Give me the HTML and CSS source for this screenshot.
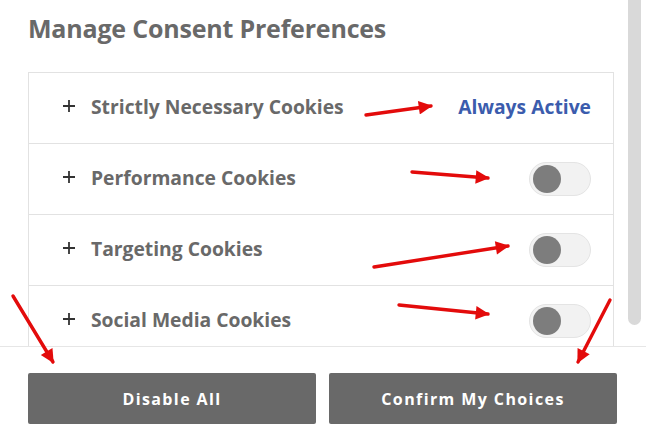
FILE: index.html
```html
<!DOCTYPE html>
<html lang="en">
<head>
  <meta charset="UTF-8" />
  <meta name="viewport" content="width=device-width, initial-scale=1.0" />
  <title>Manage Consent Preferences</title>
  <link rel="stylesheet" href="styles.css">
</head>
<body>
  <div class="panel">
    <!-- Scrolling part -->
    <div class="scroll-area">
      <div class="scroll-content">
        <h2>Manage Consent Preferences</h2>
        <div class="category-list">
          <div class="category-row">
            <span class="category-name"><svg class="plus" viewBox="0 0 12 12"><path d="M6 0v12M0 6h12"/></svg>Strictly Necessary Cookies</span>
            <span class="always-active">Always Active</span>
          </div>
          <div class="category-row">
            <span class="category-name"><svg class="plus" viewBox="0 0 12 12"><path d="M6 0v12M0 6h12"/></svg>Performance Cookies</span>
            <span class="toggle"><span class="knob"></span></span>
          </div>
          <div class="category-row">
            <span class="category-name"><svg class="plus" viewBox="0 0 12 12"><path d="M6 0v12M0 6h12"/></svg>Targeting Cookies</span>
            <span class="toggle"><span class="knob"></span></span>
          </div>
          <div class="category-row">
            <span class="category-name"><svg class="plus" viewBox="0 0 12 12"><path d="M6 0v12M0 6h12"/></svg>Social Media Cookies</span>
            <span class="toggle"><span class="knob"></span></span>
          </div>
        </div>
      </div>
      <div class="scrollbar"><div class="thumb"></div></div>
    </div>

    <!-- Buttons -->
    <div class="footer">
      <button class="btn">Disable All</button>
      <button class="btn">Confirm My Choices</button>
    </div>

    <!-- Annotation arrows -->
    <svg class="arrows" width="646" height="442" viewBox="0 0 646 442">
      <defs>
        <marker id="head" viewBox="0 0 10 10" refX="9" refY="5" markerWidth="6" markerHeight="4" orient="auto">
          <path d="M0 0L10 5L0 10z" fill="#e30b0b"/>
        </marker>
      </defs>
      <g stroke="#e30b0b" stroke-width="3.4" stroke-linecap="round" marker-end="url(#head)">
        <line x1="366" y1="115" x2="431" y2="106"/>
        <line x1="412" y1="172" x2="488" y2="178"/>
        <line x1="374" y1="267" x2="508" y2="246"/>
        <line x1="399" y1="305" x2="488" y2="314"/>
        <line x1="13" y1="296" x2="53" y2="362"/>
        <line x1="610" y1="300" x2="578" y2="362"/>
      </g>
    </svg>
  </div>
</body>
</html>
```

FILE: styles.css
```css
* {
  box-sizing: border-box;
}

body {
  margin: 0;
  font-family: "Open Sans", "Liberation Sans", sans-serif;
  background: white;
}

.panel {
  position: relative;
  width: 646px;
  height: 442px;
  overflow: hidden;
}

.scroll-area {
  display: flex;
  height: 346px;
  overflow: hidden;
}

.scroll-content {
  flex: 1;
  padding: 0 0 0 28px;
}

h2 {
  margin: 0;
  padding-top: 11px;
  height: 72px;
  font-size: 25px;
  font-weight: 700;
  color: #696969;
  letter-spacing: -0.2px;
}

.category-list {
  width: 586px;
  border: 1px solid #e2e2e2;
}

.category-row {
  display: flex;
  justify-content: space-between;
  align-items: center;
  height: 71px;
  padding: 0 22px 0 34px;
  border-bottom: 1px solid #e2e2e2;
}

.category-name {
  display: flex;
  align-items: center;
  gap: 16px;
  padding-bottom: 4px;
  font-size: 19.3px;
  font-weight: 700;
  color: #696969;
}

.plus {
  width: 12px;
  height: 12px;
  stroke: #333;
  stroke-width: 1.8;
  fill: none;
}

.always-active {
  padding-bottom: 4px;
  font-size: 19.3px;
  font-weight: 700;
  color: #3b5cad;
}

.toggle {
  display: flex;
  align-items: center;
  width: 62px;
  height: 34px;
  padding: 0 3px;
  border: 1px solid #e4e4e4;
  border-radius: 17px;
  background: #f2f2f2;
}

.knob {
  width: 28px;
  height: 28px;
  border-radius: 50%;
  background: #7d7d7d;
}

.scrollbar {
  width: 13px;
  margin-right: 5px;
}

.thumb {
  height: 325px;
  background: #d9d9d9;
  border-radius: 0 0 7px 7px;
}

.footer {
  display: flex;
  gap: 13px;
  padding: 26px 29px 0 28px;
  border-top: 1px solid #e6e6e6;
}

.btn {
  flex: 1;
  height: 51px;
  border: none;
  border-radius: 2px;
  background: #696969;
  color: white;
  font-family: "Open Sans", "Liberation Sans", sans-serif;
  font-size: 16px;
  font-weight: 700;
  letter-spacing: 1.4px;
  cursor: pointer;
}

.arrows {
  position: absolute;
  left: 0;
  top: 0;
  pointer-events: none;
}
```
